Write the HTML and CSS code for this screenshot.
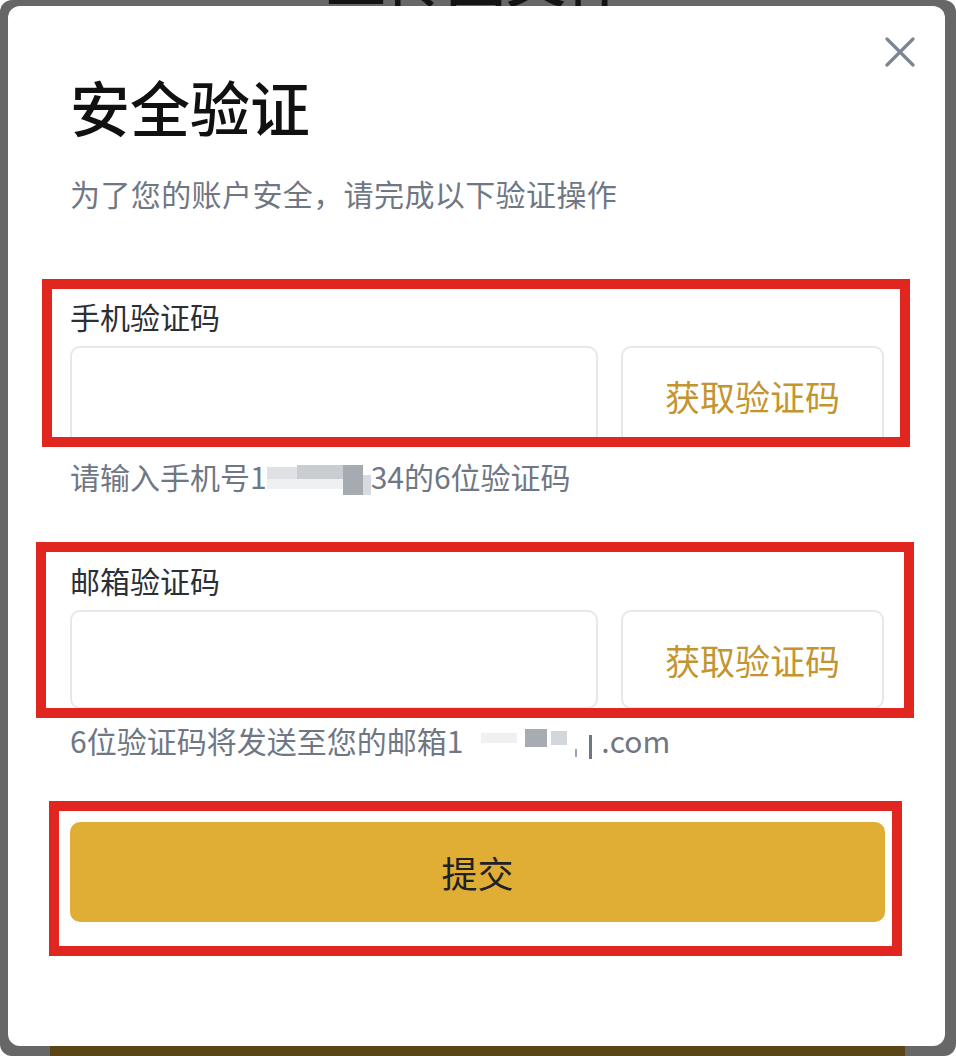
FILE: index.html
```html
<!DOCTYPE html>
<html lang="zh-CN">
<head>
  <meta charset="UTF-8">
  <meta name="viewport" content="width=device-width, initial-scale=1.0">
  <title>安全验证</title>
  <link rel="stylesheet" href="styles.css">
</head>
<body>
  <div class="screen">
    <!-- page behind the overlay -->
    <div class="bg-title">上传图文件</div>
    <div class="bg-button"></div>

    <div class="modal">
      <button class="close-btn" aria-label="关闭">
        <svg width="30" height="30" viewBox="0 0 30 30">
          <path d="M2 2 L28 28 M28 2 L2 28" stroke="#7d8594" stroke-width="3.2" stroke-linecap="round" fill="none"/>
        </svg>
      </button>

      <h1 class="modal-title">安全验证</h1>
      <p class="modal-desc">为了您的账户安全，请完成以下验证操作</p>

      <div class="field field-phone">
        <label class="field-label">手机验证码</label>
        <div class="field-row">
          <input class="code-input" type="text">
          <button class="send-btn">获取验证码</button>
        </div>
        <p class="field-hint">请输入手机号1<span class="mask mask-phone"></span>34的6位验证码</p>
      </div>

      <div class="field field-email">
        <label class="field-label">邮箱验证码</label>
        <div class="field-row">
          <input class="code-input" type="text">
          <button class="send-btn">获取验证码</button>
        </div>
        <p class="field-hint">6位验证码将发送至您的邮箱1<span class="mask mask-email"></span>.com</p>
      </div>

      <button class="submit-btn">提交</button>
    </div>

    <!-- red annotation frames -->
    <div class="mark mark-1"></div>
    <div class="mark mark-2"></div>
    <div class="mark mark-3"></div>
  </div>
</body>
</html>
```

FILE: styles.css
```css
/* Security verification modal */
body {
  margin: 0;
  background-color: #fff;
  font-family: "Noto Sans CJK SC", "Noto Sans", sans-serif;
}
.screen {
  position: relative;
  width: 956px;
  height: 1056px;
  box-sizing: border-box;
  padding: 6px 11px 10px 8px;
  background-color: #676767;
  border-radius: 12px;
  overflow: hidden;
}
.bg-title {
  position: absolute;
  top: -54px;
  left: 326px;
  font-size: 60px;
  line-height: 60px;
  font-weight: 500;
  color: #141414;
}
.bg-button {
  position: absolute;
  left: 50px;
  bottom: 0;
  width: 855px;
  height: 12px;
  background-color: #5a4517;
}
.modal {
  position: relative;
  z-index: 1;
  height: 100%;
  box-sizing: border-box;
  padding: 64px 61px 0 62px;
  background-color: #fff;
  border-radius: 12px;
}
.close-btn {
  position: absolute;
  top: 31px;
  right: 30px;
  width: 30px;
  height: 30px;
  padding: 0;
  border: none;
  background: none;
  cursor: pointer;
}
.close-btn svg {
  display: block;
}
.modal-title {
  margin: 0;
  font-size: 60px;
  line-height: 72px;
  font-weight: 500;
  color: #111;
}
.modal-desc {
  margin: 31px 0 0;
  font-size: 30px;
  line-height: 40px;
  color: #6f7784;
  letter-spacing: 0.4px;
}
.field-phone {
  margin-top: 83px;
}
.field-email {
  margin-top: 64px;
}
.field-label {
  display: block;
  font-size: 30px;
  line-height: 40px;
  font-weight: 400;
  color: #2b2f36;
}
.field-row {
  display: flex;
  gap: 23px;
  margin-top: 10px;
  height: 99px;
}
.code-input {
  flex: 1;
  min-width: 0;
  box-sizing: border-box;
  border: 2px solid #e6e8eb;
  border-radius: 10px;
  font-size: 30px;
  padding: 0 20px;
  outline: none;
}
.send-btn {
  width: 263px;
  box-sizing: border-box;
  border: 2px solid #e6e8eb;
  border-radius: 10px;
  background-color: #fff;
  font-family: inherit;
  font-size: 35px;
  font-weight: 400;
  color: #c4952f;
  cursor: pointer;
}
.field-hint {
  margin: 11px 0 0;
  font-size: 30px;
  line-height: 40px;
  color: #6f7784;
}
.mask {
  display: inline-block;
  vertical-align: -6px;
  height: 30px;
}
.mask-phone {
  width: 104px;
  background:
    linear-gradient(#dfe1e5, #dfe1e5) 0 2px / 30px 12px no-repeat,
    linear-gradient(#c9ccd1, #c9ccd1) 30px 0 / 46px 14px no-repeat,
    linear-gradient(#a6aab1, #a6aab1) 76px 0 / 20px 30px no-repeat,
    linear-gradient(#d7dade, #d7dade) 96px 10px / 8px 20px no-repeat,
    linear-gradient(#eef0f2, #eef0f2) 0 14px / 76px 10px no-repeat;
}
.mask-email {
  width: 138px;
  background:
    linear-gradient(#eef0f2, #eef0f2) 18px 4px / 36px 10px no-repeat,
    linear-gradient(#a7abb2, #a7abb2) 62px 0 / 22px 18px no-repeat,
    linear-gradient(#d3d6da, #d3d6da) 88px 2px / 16px 14px no-repeat,
    linear-gradient(#9ea2a9, #9ea2a9) 112px 20px / 2px 8px no-repeat,
    linear-gradient(#6f7784, #6f7784) 126px 6px / 3px 24px no-repeat;
}
.submit-btn {
  display: block;
  width: 815px;
  height: 100px;
  margin-top: 62px;
  border: none;
  border-radius: 10px;
  background-color: #e1ae35;
  font-family: inherit;
  font-size: 36px;
  font-weight: 400;
  color: #1e2226;
  cursor: pointer;
}
.mark {
  position: absolute;
  z-index: 2;
  box-sizing: border-box;
  border: 10px solid #e0261f;
  pointer-events: none;
}
.mark-1 {
  left: 42px;
  top: 279px;
  width: 868px;
  height: 168px;
}
.mark-2 {
  left: 36px;
  top: 542px;
  width: 878px;
  height: 176px;
}
.mark-3 {
  left: 49px;
  top: 801px;
  width: 853px;
  height: 155px;
}
```
